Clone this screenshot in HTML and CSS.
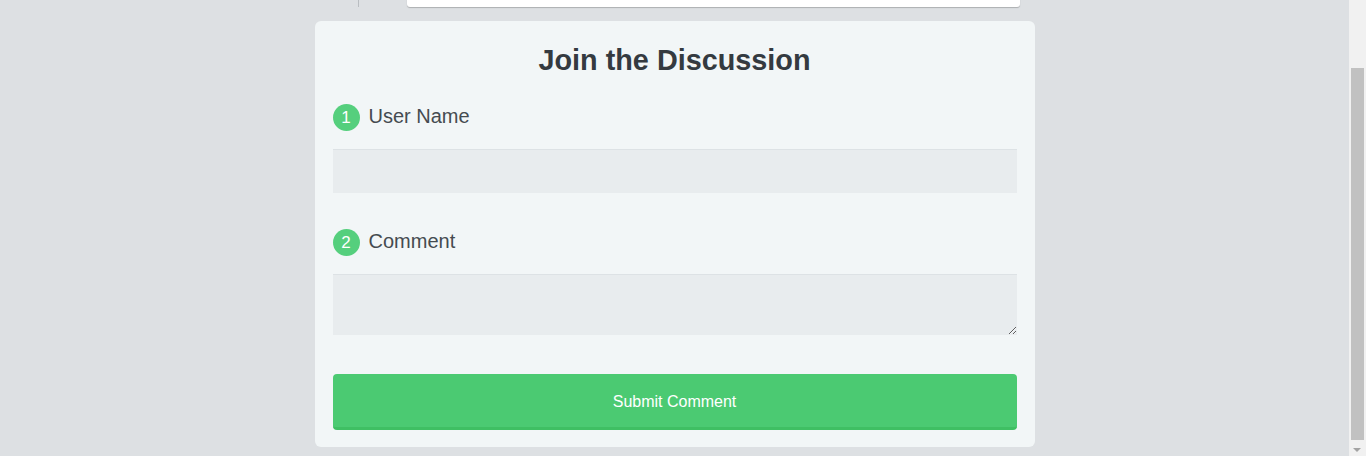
FILE: index.html
```html
<!DOCTYPE html>
<html lang="en">
<head>
<meta charset="utf-8">
<title>Join the Discussion</title>
<link rel="stylesheet" href="styles.css">
</head>
<body>
<main class="page">
  <ul class="comments">
    <li class="comment">
      <span class="thread-line"></span>
      <div class="comment-box"></div>
    </li>
  </ul>
  <form class="card">
    <h2 class="title">Join the Discussion</h2>
    <div class="field">
      <label class="label" for="user"><span class="step">1</span><span class="label-text">User Name</span></label>
      <input class="input" id="user" type="text">
    </div>
    <div class="field field-last">
      <label class="label" for="comment"><span class="step">2</span><span class="label-text">Comment</span></label>
      <textarea class="input textarea" id="comment"></textarea>
    </div>
    <button class="submit" type="button">Submit Comment</button>
  </form>
</main>
<div class="scrollbar" aria-hidden="true">
  <div class="scroll-thumb"></div>
  <div class="scroll-arrow"></div>
</div>
<script src="script.js"></script>
</body>
</html>
```
FILE: styles.css
```css
* { box-sizing: border-box; }
html, body { margin: 0; }
body {
  background: #dde0e3;
  font-family: "Liberation Sans", Arial, sans-serif;
  padding: 8px 17px 9px 0;
}
.page {
  width: 720px;
  margin: 0 auto;
}
.comments {
  list-style: none;
  margin: 0 0 14px;
  padding: 0;
}
.comment {
  height: 60px;
  display: flex;
}
.thread-line {
  width: 1px;
  margin-left: 43px;
  background: #b9bdc1;
}
.comment-box {
  width: 613px;
  margin-left: 48px;
  background: #ffffff;
  border-radius: 0 0 3px 3px;
  box-shadow: 0 1px 1px rgba(0, 0, 0, 0.22);
}
.card {
  background: #f2f6f7;
  border-radius: 6px;
  padding: 18px 18px 17px;
}
.title {
  margin: 4px 0 0;
  font-size: 28.8px;
  line-height: 34px;
  text-align: center;
  font-weight: bold;
  color: #343a40;
}
.field {
  margin-top: 27px;
}
.field + .field { margin-top: 36px; }
.label {
  display: flex;
  align-items: flex-start;
  height: 27px;
  font-size: 20px;
  color: #454b50;
  margin-bottom: 18px;
}
.label-text {
  line-height: 25px;
}
.step {
  width: 27px;
  height: 27px;
  border-radius: 50%;
  background: #55cf7d;
  color: #fff;
  font-size: 17px;
  display: flex;
  align-items: center;
  justify-content: center;
  margin-right: 9px;
}
.input {
  display: block;
  width: 100%;
  height: 44px;
  border: none;
  border-top: 1px solid #dde2e5;
  background: #e8ecee;
  font: inherit;
  margin: 0;
  padding: 8px 12px;
}
.textarea {
  height: 61px;
  resize: vertical;
}
.submit {
  display: block;
  width: 100%;
  height: 56px;
  margin-top: 39px;
  border: none;
  border-bottom: 3px solid #3fbf63;
  border-radius: 4px;
  background: #4bca72;
  color: #ffffff;
  font-family: "Liberation Sans", Arial, sans-serif;
  font-size: 16px;
  padding: 3px 0 0;
  cursor: pointer;
}
.scrollbar {
  position: fixed;
  top: 0;
  right: 0;
  width: 17px;
  height: 100vh;
  background: #f1f1f1;
}
.scroll-thumb {
  position: absolute;
  top: 68px;
  left: 2px;
  width: 13px;
  height: 372px;
  background: #c1c1c1;
}
.scroll-arrow {
  position: absolute;
  bottom: 4px;
  left: 4px;
  width: 0;
  height: 0;
  border-left: 4px solid transparent;
  border-right: 4px solid transparent;
  border-top: 4px solid #a3a3a3;
}
```
FILE: script.js
```js
window.scrollTo(0, document.documentElement.scrollHeight);
```
